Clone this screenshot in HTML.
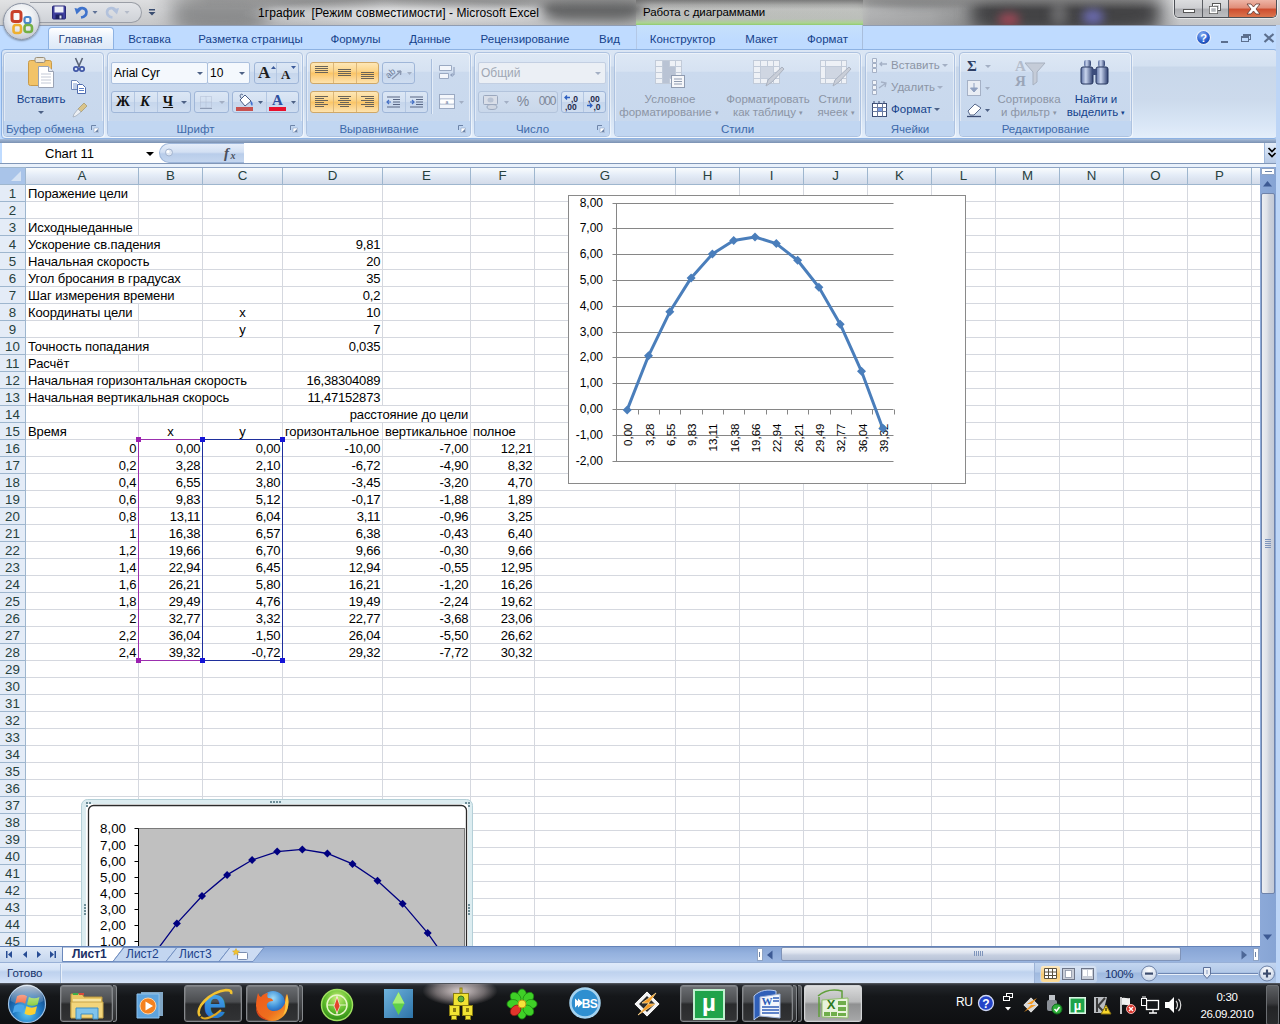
<!DOCTYPE html>
<html lang="ru">
<head>
<meta charset="utf-8">
<title>1график [Режим совместимости] - Microsoft Excel</title>
<style>
*{box-sizing:border-box;margin:0;padding:0}
html,body{width:1280px;height:1024px;overflow:hidden;background:#fff}
body{position:relative;font-family:"Liberation Sans",sans-serif;font-size:11px;color:#15428b}
.abs{position:absolute}
#titlebar{position:absolute;left:0;top:0;width:1280px;height:25px;background:#c9ccd1;overflow:hidden}
#tabrow{position:absolute;left:0;top:25px;width:1280px;height:25px;background:#bfdbff}
#ribbon{position:absolute;left:0;top:49px;width:1280px;height:91px;background:#bfdbff}
#fbar{position:absolute;left:0;top:140px;width:1280px;height:27px;background:#bcd2ee}
#grid{position:absolute;left:0;top:167px;width:1260px;height:779px;background:#fff;overflow:hidden}
#vscroll{position:absolute;left:1260px;top:167px;width:16px;height:795px;background:#b3cbea}
#tabsbar{position:absolute;left:0;top:946px;width:1280px;height:16px;background:#9db8df}
#status{position:absolute;left:0;top:962px;width:1280px;height:21px;background:#cfdff5}
#taskbar{position:absolute;left:0;top:983px;width:1280px;height:41px;background:#1a1d21}
</style>
</head>
<body>
<style>
#titlebar{background:linear-gradient(90deg,#d8d9db 0,#d2d3d5 150px,#c2c3c5 260px,#cfd0d2 520px,#bcbdbc 640px,#bfc1be 860px,#b4b5b6 870px,#a9aaab 930px,#8f9091 975px,#9b9c9e 1150px,#cfd0d2 1180px,#d2d3d5 1280px)}
#titlebar .shade{position:absolute;left:0;top:0;width:1280px;height:25px;background:linear-gradient(rgba(255,255,255,.25),rgba(255,255,255,0) 40%,rgba(0,0,0,.06) 100%)}
#titlebar .glow{position:absolute;left:240px;top:0;width:320px;height:25px;background:radial-gradient(ellipse 160px 14px at 50% 55%,rgba(255,255,255,.55),rgba(255,255,255,0))}
#titlebar .ctx{position:absolute;left:636px;top:0;width:227px;height:25px;background:linear-gradient(rgba(90,90,90,.55) 0,rgba(150,150,150,.25) 5px,rgba(200,200,200,.0) 9px,rgba(196,204,192,.25) 19px,#acd392 23px,#8fca6c 25px)}
#titlebar .blob{position:absolute;border-radius:50%;filter:blur(5px)}
#title{position:absolute;left:258px;top:6px;font-size:12px;color:#000;white-space:nowrap;letter-spacing:.08px}
#ctxtitle{position:absolute;left:643px;top:6px;font-size:11.5px;color:#000;white-space:nowrap;letter-spacing:-.05px}
#winbtns{position:absolute;left:1174px;top:0;width:103px;height:18px;border:1px solid #4c4f55;border-top:none;border-radius:0 0 5px 5px;overflow:hidden;box-shadow:0 0 0 1px rgba(255,255,255,.55)}
#winbtns div{position:absolute;top:0;height:18px}
#qat{position:absolute;left:30px;top:2px;width:112px;height:21px;border:1px solid #9a9ea6;border-left:none;border-radius:0 11px 11px 0;background:linear-gradient(#e3e5e9,#cfd2d7)}
#orb{position:absolute;left:3px;top:3px;width:37px;height:37px;border-radius:50%;background:radial-gradient(circle at 50% 35%,#ffffff 0,#eef0f3 40%,#c9ced8 75%,#aab1bf 100%);border:1px solid #8b93a3;box-shadow:0 1px 2px rgba(0,0,0,.35);z-index:5}
</style>
<div id="titlebar">
 <div class="blob" style="left:172px;top:-8px;width:95px;height:42px;background:#8e8f90;border-radius:35%;filter:blur(9px)"></div>
 <div class="blob" style="left:255px;top:-10px;width:130px;height:18px;background:#8a8b8c;filter:blur(6px)"></div>
 <div class="blob" style="left:380px;top:-8px;width:170px;height:15px;background:#8e8f90"></div>
 <div class="blob" style="left:542px;top:-6px;width:100px;height:27px;background:#636465;border-radius:30%;filter:blur(6px)"></div>
 <div class="blob" style="left:860px;top:-8px;width:120px;height:14px;background:#757677"></div>
 <div class="blob" style="left:972px;top:-8px;width:186px;height:40px;background:#434345;border-radius:25%;filter:blur(8px)"></div>
 <div class="blob" style="left:998px;top:13px;width:22px;height:14px;background:#a04a58"></div>
 <div class="blob" style="left:1050px;top:2px;width:18px;height:26px;background:#6a6a6c"></div>
 <div class="blob" style="left:1082px;top:9px;width:22px;height:16px;background:#6c6cb0"></div>
 <div class="abs" style="left:150px;top:0;width:1025px;height:9px;background:linear-gradient(rgba(75,75,75,.5),rgba(75,75,75,.28) 4px,rgba(75,75,75,0) 9px);-webkit-mask-image:linear-gradient(90deg,transparent,#000 60px,#000 980px,transparent)"></div>
 <div class="shade"></div>
 <div class="ctx"></div>
 <div class="glow"></div>
 <div id="qat"></div>
 <svg class="abs" style="left:46px;top:3px" width="120" height="20" viewBox="0 0 120 20">
  <rect x="6.500" y="3" width="13" height="13" rx="1" fill="#3f3f9f" stroke="#2a2a78"/>
  <rect x="8.500" y="3.500" width="9" height="6" fill="#eef0f8"/>
  <rect x="9.500" y="11.500" width="7" height="4.500" fill="#1d2060"/><rect x="13.500" y="12.500" width="2" height="3" fill="#dfe3f0"/>
  <path d="M32 8 C33 4 40 4 40.500 9 C40.500 12 38 14 35 14.500" fill="none" stroke="#3f73cc" stroke-width="2.600"/>
  <path d="M28.500 5 L35.500 6.500 L30.500 11.500 Z" fill="#3f73cc"/>
  <path d="M46.500 8 l5 0 l-2.500 3z" fill="#5f7296"/>
  <path d="M69.500 8 C68.500 4 61.500 4 61 9 C61 12 63.500 14 66.500 14.500" fill="none" stroke="#b3c2dc" stroke-width="2.600"/>
  <path d="M73 5 L66 6.500 L71 11.500 Z" fill="#b3c2dc"/>
  <path d="M78.500 8 l5 0 l-2.500 3z" fill="#b4bbc8"/>
  <rect x="103" y="6" width="6" height="1.500" fill="#3a4d70"/>
  <path d="M102.500 9 l7 0 l-3.500 3.500z" fill="#3a4d70"/>
 </svg>
 <div id="title">1график&nbsp; [Режим совместимости] - Microsoft Excel</div>
 <div id="ctxtitle">Работа с диаграммами</div>
 <div id="winbtns">
  <div style="left:0;width:28px;background:linear-gradient(#dcdddf 0,#cdced1 45%,#adaeb2 50%,#bfc0c3 100%);border-right:1px solid #5a5d63"></div>
  <div style="left:28px;width:26px;background:linear-gradient(#dcdddf 0,#cdced1 45%,#adaeb2 50%,#bfc0c3 100%);border-right:1px solid #5a5d63"></div>
  <div style="left:54px;width:48px;background:linear-gradient(#eeb5a6 0,#e08c77 45%,#cd4c2e 50%,#dd7a52 100%)"></div>
  <svg class="abs" style="left:0;top:0" width="102" height="18" viewBox="0 0 102 18">
   <rect x="8.500" y="9.500" width="11" height="3" fill="#fff" stroke="#555"/>
   <rect x="37.500" y="3.500" width="8" height="7" fill="none" stroke="#555" /><rect x="38.500" y="4.500" width="6" height="5" fill="none" stroke="#fff"/>
   <rect x="34.500" y="6.500" width="8" height="7" fill="#b3b6bb" stroke="#555"/><rect x="35.500" y="7.500" width="6" height="5" fill="none" stroke="#fff" stroke-width="1.500"/>
   <path d="M72 4 L76 4 L78.500 7 L81 4 L85 4 L81 9 L85 14 L81 14 L78.500 11 L76 14 L72 14 L76 9 Z" fill="#fff" stroke="#5b3530" stroke-width=".8"/>
  </svg>
 </div>
</div>
<div id="orb">
 <svg width="35" height="35" viewBox="0 0 35 35" style="position:absolute;left:0;top:0">
  <rect x="8" y="7.500" width="9" height="10" rx="2.500" fill="none" stroke="#c8402a" stroke-width="3"/>
  <rect x="20.500" y="13" width="6" height="6" rx="2" fill="none" stroke="#4a86c8" stroke-width="2.200"/>
  <rect x="9.500" y="21" width="7.500" height="8" rx="2.500" fill="none" stroke="#eeb030" stroke-width="2.600"/>
  <rect x="20.500" y="21" width="7.500" height="7" rx="2.500" fill="none" stroke="#74b044" stroke-width="2.600"/>
 </svg>
</div>
<style>
#tabrow .t{position:absolute;top:6px;height:16px;line-height:16px;font-size:11.5px;color:#15428b;white-space:nowrap;text-align:center}
#acttab{position:absolute;left:48px;top:2px;width:66px;height:24px;border:1px solid #8db2e3;border-bottom:none;border-radius:4px 4px 0 0;background:linear-gradient(#ffffff 0,#eaf2fc 40%,#dbe7f6 100%)}
#ctxzone{position:absolute;left:636px;top:0;width:227px;height:25px;border-left:1px solid #b3c8e6;border-right:1px solid #a9bedc;background:linear-gradient(#c6e0fb,#bfdbff 60%)}
</style>
<div id="tabrow">
 <div class="abs" style="left:0;top:0;width:1280px;height:1px;background:#8f9cb2"></div>
 <div id="ctxzone"></div>
 <div id="acttab"></div>
 <div class="t" style="left:49px;width:63px;color:#1e3f7a">Главная</div>
 <div class="t" style="left:119px;width:61px">Вставка</div>
 <div class="t" style="left:189px;width:123px">Разметка страницы</div>
 <div class="t" style="left:321px;width:69px">Формулы</div>
 <div class="t" style="left:399px;width:62px">Данные</div>
 <div class="t" style="left:470px;width:110px">Рецензирование</div>
 <div class="t" style="left:589px;width:41px">Вид</div>
 <div class="t" style="left:642px;width:81px">Конструктор</div>
 <div class="t" style="left:731px;width:61px">Макет</div>
 <div class="t" style="left:797px;width:61px">Формат</div>
 <svg class="abs" style="left:1194px;top:3px" width="86" height="20" viewBox="0 0 86 20">
  <defs><radialGradient id="hg" cx=".4" cy=".3" r=".8"><stop offset="0" stop-color="#8fb4f2"/><stop offset=".6" stop-color="#2a5fd0"/><stop offset="1" stop-color="#123a94"/></radialGradient></defs>
  <circle cx="9.500" cy="9.500" r="7" fill="url(#hg)" stroke="#e8f0fb" stroke-width="1.200"/>
  <text x="9.500" y="13.500" font-family="Liberation Sans,sans-serif" font-size="11" font-weight="bold" fill="#fff" text-anchor="middle">?</text>
  <rect x="27" y="13" width="7" height="2" fill="#5c6f8e"/>
  <rect x="49.500" y="6.500" width="7" height="5" fill="none" stroke="#5c6f8e"/><rect x="49" y="6" width="8" height="2" fill="#5c6f8e"/>
  <rect x="47.500" y="8.500" width="7" height="5" fill="#bfdbff" stroke="#5c6f8e"/><rect x="47" y="8" width="8" height="2" fill="#5c6f8e"/>
  <path d="M70.500 6 L79.500 14 M79.500 6 L70.500 14" stroke="#5c6f8e" stroke-width="2.200"/>
 </svg>
</div>
<style>
#ribbon .frame{position:absolute;left:1px;top:0;width:1277px;height:90px;border:1px solid #8db2e3;border-radius:4px;background:linear-gradient(#dbe6f4 0,#d4e1f1 16px,#c8d7ea 17px,#ccdaec 50px,#d9e6f6 74px,#e5effb 89px)}
.grp{position:absolute;top:1px;height:85px;border:1px solid #adc2e0;border-radius:4px;background:linear-gradient(#dde8f5 0,#d6e2f2 22%,#cbdaee 23%,#c8d8ed 80%,#c9d9ee 100%);box-shadow:inset 0 0 0 1px rgba(255,255,255,.45),1px 1px 0 rgba(255,255,255,.5)}
.grp .lbl{position:absolute;left:0;right:0;bottom:0;height:15px;line-height:16px;background:#c1d6f1;color:#3e6aaa;font-size:11.5px;text-align:center;border-radius:0 0 3px 3px;white-space:nowrap}
.grp .dl{position:absolute;right:4px;bottom:3px;width:8px;height:8px}
.rt{position:absolute;font-size:11.5px;line-height:13px;color:#15428b;white-space:nowrap;text-align:center}
.dis{color:#8c95a5}
.box{position:absolute;height:22px;border:1px solid #abc0de;border-radius:2px;background:#d5e1f2}
.btns{position:absolute;height:22px;border:1px solid #9fb6d8;border-radius:3px;background:linear-gradient(#dce7f5 0,#d3e0f1 48%,#c6d6ec 52%,#cfddf0 100%)}
.btns i{position:absolute;top:0;width:1px;height:20px;background:#b4c7e2}
.obtn{position:absolute;height:22px;border:1px solid #cfa868;border-radius:3px;background:linear-gradient(#fee7b6 0,#fcd58a 40%,#fbc668 52%,#fcd48c 75%,#fee3ad 100%)}
.obtn i{position:absolute;top:0;width:1px;height:20px;background:#dcb678}
.ar{position:absolute;width:0;height:0;border-left:3px solid transparent;border-right:3px solid transparent;border-top:3px solid #4d6185}
.ar.g{border-top-color:#a3afc4}
</style>
<div id="ribbon">
<div class="frame"></div>
<div class="abs" style="left:0;top:2px;width:1280px;height:89px">

<!-- ===== Буфер обмена ===== -->
<div class="grp" style="left:3px;width:101px">
 <div class="lbl" style="text-align:left;padding-left:2px">Буфер обмена</div>
 <svg class="dl" viewBox="0 0 8 8"><path d="M.5 5V.5H5" fill="none" stroke="#6d84a8"/><path d="M3 3h4.500v4.500H3z" fill="#fff" stroke="#8ea2c2" stroke-width=".6"/><path d="M4 7L7 7L7 4Z" fill="#6d84a8"/></svg>
</div>
<svg class="abs" style="left:26px;top:5px" width="34" height="34" viewBox="0 0 34 34">
 <rect x="2.500" y="4.500" width="23" height="25" rx="2" fill="#f2c368" stroke="#c89a4a"/>
 <rect x="9" y="1.500" width="10" height="5" rx="1.500" fill="#e9e4d8" stroke="#9a8e78"/>
 <path d="M12.500 10.500h10l5 5v16h-15z" fill="#fff" stroke="#9aa3b5"/>
 <path d="M22.500 10.500v5h5" fill="#e4e8f0" stroke="#9aa3b5"/>
 <path d="M15 18h10M15 21h10M15 24h10M15 27h10" stroke="#c3c9d6"/>
</svg>
<div class="rt" style="left:11px;width:60px;top:42px">Вставить</div>
<div class="ar" style="left:38px;top:60px"></div>
<svg class="abs" style="left:70px;top:6px" width="20" height="62" viewBox="0 0 20 62">
 <path d="M5.500 1 L9.500 10 M12.500 1 L8.500 10" stroke="#5a6478" stroke-width="1.600" fill="none"/>
 <circle cx="6" cy="12" r="2.200" fill="none" stroke="#3f55a5" stroke-width="1.700"/><circle cx="12" cy="12" r="2.200" fill="none" stroke="#3f55a5" stroke-width="1.700"/>
 <path d="M1.500 23.500h5l3 3v6h-8z" fill="#fff" stroke="#6d86b8"/><path d="M3 27h4M3 29h4M3 31h4" stroke="#7f9bd0"/>
 <path d="M7.500 27.500h5l3 3v6h-8z" fill="#fff" stroke="#4f6cae"/><path d="M9 31.500h5M9 33.500h5" stroke="#5f82c8"/>
 <path d="M14 46 l3 3 l-6 6 l-3 -3z" fill="#d9c48a" stroke="#a89a72" stroke-width=".8"/><path d="M8 52l3 3l-5 4l-3 1l1 -3z" fill="#eceff3" stroke="#a5adba" stroke-width=".8"/>
</svg>

<!-- ===== Шрифт ===== -->
<div class="grp" style="left:107px;width:196px">
 <div class="lbl" style="padding-right:19px">Шрифт</div>
 <svg class="dl" viewBox="0 0 8 8"><path d="M.5 5V.5H5" fill="none" stroke="#6d84a8"/><path d="M3 3h4.500v4.500H3z" fill="#fff" stroke="#8ea2c2" stroke-width=".6"/><path d="M4 7L7 7L7 4Z" fill="#6d84a8"/></svg>
</div>
<div class="box" style="left:111px;top:11px;width:97px;background:#f4f8fd"></div>
<div class="rt" style="left:114px;top:16px;color:#000;font-size:12px">Arial Cyr</div>
<div class="ar" style="left:197px;top:21px"></div>
<div class="box" style="left:207px;top:11px;width:43px;background:#f4f8fd"></div>
<div class="rt" style="left:210px;top:16px;color:#000;font-size:12px">10</div>
<div class="ar" style="left:239px;top:21px"></div>
<div class="btns" style="left:254px;top:11px;width:45px"><i style="left:21px"></i></div>
<div class="rt" style="left:258px;top:13px;color:#1f1f1f;font-family:'Liberation Serif',serif;font-size:17px;font-weight:bold;line-height:18px">A</div>
<div class="rt" style="left:281px;top:16px;color:#1f1f1f;font-family:'Liberation Serif',serif;font-size:13px;font-weight:bold;line-height:16px">A</div>
<svg class="abs" style="left:270px;top:14px" width="28" height="8" viewBox="0 0 28 8"><path d="M1 4l2.500-3l2.500 3z" fill="#3b5a9a"/><path d="M21 1l2.500 3l2.500-3z" fill="#3b5a9a"/></svg>

<div class="btns" style="left:111px;top:40px;width:80px"><i style="left:22px"></i><i style="left:45px"></i></div>
<div class="rt" style="left:113px;top:43px;width:20px;color:#111;font-family:'Liberation Serif',serif;font-size:14px;font-weight:bold;line-height:16px">Ж</div>
<div class="rt" style="left:135px;top:43px;width:20px;color:#111;font-family:'Liberation Serif',serif;font-size:14px;font-weight:bold;font-style:italic;line-height:16px">К</div>
<div class="rt" style="left:158px;top:43px;width:20px;color:#111;font-family:'Liberation Serif',serif;font-size:14px;font-weight:bold;text-decoration:underline;line-height:16px">Ч</div>
<div class="ar" style="left:181px;top:50px"></div>
<div class="btns" style="left:194px;top:40px;width:35px"></div>
<svg class="abs" style="left:199px;top:44px" width="16" height="15" viewBox="0 0 16 15"><path d="M1.500 1.500h11v11h-11z M7 1.500v11 M1.500 7h11" fill="none" stroke="#b1bdd2" stroke-dasharray="1 1"/><path d="M1 13.500h12" stroke="#8e9cb5"/></svg>
<div class="ar g" style="left:219px;top:50px"></div>
<div class="btns" style="left:232px;top:40px;width:67px"><i style="left:33px"></i></div>
<svg class="abs" style="left:235px;top:42px" width="62" height="19" viewBox="0 0 62 19">
 <path d="M5 7l5-5l6 6l-6 5z" fill="#fff" stroke="#4a5d85"/><path d="M8 2c-2-2-4 0-2 3" fill="none" stroke="#4a5d85"/><path d="M16 8c2 1 2 4 1 5c-1-1-2-3-1-5z" fill="#3e6fd0"/>
 <rect x="1" y="14" width="17" height="4" fill="#c8514f"/>
 <path d="M23 8l5 0l-2.500 3z" fill="#4d6185"/>
 <text x="42.500" y="12" font-family="Liberation Serif,serif" font-size="15" font-weight="bold" fill="#2d4f9e" text-anchor="middle">A</text>
 <rect x="34" y="14" width="17" height="4" fill="#e8112d"/>
 <path d="M56 8l5 0l-2.500 3z" fill="#4d6185"/>
</svg>

<!-- ===== Выравнивание ===== -->
<div class="grp" style="left:306px;width:165px">
 <div class="lbl" style="padding-right:19px">Выравнивание</div>
 <svg class="dl" viewBox="0 0 8 8"><path d="M.5 5V.5H5" fill="none" stroke="#6d84a8"/><path d="M3 3h4.500v4.500H3z" fill="#fff" stroke="#8ea2c2" stroke-width=".6"/><path d="M4 7L7 7L7 4Z" fill="#6d84a8"/></svg>
</div>
<div class="obtn" style="left:310px;top:11px;width:69px"><i style="left:22px"></i><i style="left:45px"></i></div>
<svg class="abs" style="left:310px;top:11px" width="69" height="22" viewBox="0 0 69 22"><path d="M5 4.500h13M5 6.500h13M5 8.500h13M5 10.500h13 M28 7.500h13M28 9.500h13M28 11.500h13M28 13.500h13 M51 10.500h13M51 12.500h13M51 14.500h13M51 16.500h13" stroke="#6a6458" stroke-width="1"/></svg>
<div class="btns" style="left:382px;top:11px;width:33px"></div>
<svg class="abs" style="left:385px;top:13px" width="30" height="18" viewBox="0 0 30 18"><text x="1" y="12" font-family="Liberation Sans,sans-serif" font-size="9" fill="#6d7c99" transform="rotate(-40 6 10)">ab</text><path d="M7 15l9-8M16 7l-4 .500M16 7l-.500 4" stroke="#8a97b0" stroke-width="1.300" fill="none"/><path d="M22 8l5 0l-2.500 3z" fill="#a3afc4"/></svg>
<div class="abs" style="left:431px;top:8px;width:1px;height:55px;background:#a9bedc;box-shadow:1px 0 0 #e4edf8"></div>
<svg class="abs" style="left:437px;top:13px" width="30" height="50" viewBox="0 0 30 50">
 <path d="M2.500 1.500h12v5h-12z M2.500 9.500h9v5h-9z" fill="#f3f6fb" stroke="#9aa9c2"/><path d="M17 3v8h-3M15.500 9.500l-2 1.500l2 1.500" fill="none" stroke="#8898b6"/>
 <rect x="2.500" y="30.500" width="15" height="14" fill="#f3f6fb" stroke="#9aa9c2"/><path d="M2.500 35h15M2.500 40h15" stroke="#9aa9c2"/><rect x="3.500" y="35.500" width="13" height="4" fill="#fff"/><text x="10" y="39.500" font-size="5" font-family="Liberation Sans,sans-serif" fill="#66759a" text-anchor="middle">a</text>
 <path d="M22 37l5 0l-2.500 3z" fill="#a3afc4"/>
</svg>
<div class="obtn" style="left:310px;top:40px;width:69px"><i style="left:22px"></i><i style="left:45px"></i></div>
<svg class="abs" style="left:310px;top:40px" width="69" height="22" viewBox="0 0 69 22"><path d="M5 5.500h13M5 7.500h9M5 9.500h13M5 11.500h9M5 13.500h13M5 15.500h9 M28 5.500h13M30 7.500h9M28 9.500h13M30 11.500h9M28 13.500h13M30 15.500h9 M51 5.500h13M55 7.500h9M51 9.500h13M55 11.500h9M51 13.500h13M55 15.500h9" stroke="#6a6458" stroke-width="1"/></svg>
<div class="btns" style="left:382px;top:40px;width:46px"><i style="left:22px"></i></div>
<svg class="abs" style="left:382px;top:40px" width="46" height="22" viewBox="0 0 46 22"><path d="M5 6h13M11 8.500h7M11 11h7M11 13.500h7M5 16h13 M28 6h13M34 8.500h7M34 11h7M34 13.500h7M28 16h13" stroke="#586684" stroke-width="1.100"/><path d="M9 11l-4 0M7 9l-2 2l2 2 M28 11l4 0M30 9l2 2l-2 2" stroke="#4670c4" fill="none" stroke-width="1.200"/></svg>

<!-- ===== Число ===== -->
<div class="grp" style="left:474px;width:136px">
 <div class="lbl" style="padding-right:19px">Число</div>
 <svg class="dl" viewBox="0 0 8 8"><path d="M.5 5V.5H5" fill="none" stroke="#6d84a8"/><path d="M3 3h4.500v4.500H3z" fill="#fff" stroke="#8ea2c2" stroke-width=".6"/><path d="M4 7L7 7L7 4Z" fill="#6d84a8"/></svg>
</div>
<div class="box" style="left:478px;top:11px;width:128px;background:#ebeff5;border-color:#c3cfe2"></div>
<div class="rt" style="left:481px;top:16px;color:#a0a7b4;font-size:12px">Общий</div>
<div class="ar g" style="left:595px;top:21px"></div>
<div class="btns" style="left:478px;top:40px;width:80px;background:linear-gradient(#d3dfef,#c9d7ea);border-color:#b3c4dc"></div>
<svg class="abs" style="left:481px;top:43px" width="30" height="18" viewBox="0 0 30 18"><rect x="2.500" y="1.500" width="14" height="9" rx="1" fill="#d9dee8" stroke="#9ba8be"/><ellipse cx="9.500" cy="6" rx="3" ry="2.500" fill="#b9c3d4"/><ellipse cx="11" cy="13" rx="5" ry="2.500" fill="#cfd6e2" stroke="#9ba8be"/><path d="M23 7l5 0l-2.500 3z" fill="#a3afc4"/></svg>
<div class="rt" style="left:512px;top:44px;width:22px;color:#7d8798;font-size:14px">%</div>
<div class="rt" style="left:535px;top:44px;width:24px;color:#7d8798;font-size:12px;letter-spacing:-1.2px">000</div>
<div class="btns" style="left:561px;top:40px;width:45px"><i style="left:21px"></i></div>
<svg class="abs" style="left:561px;top:40px" width="45" height="22" viewBox="0 0 45 22">
 <g font-family="Liberation Sans,sans-serif" font-size="8.500" font-weight="bold" fill="#1d2a4a"><text x="10" y="10.500">,0</text><text x="4" y="18.500">,00</text><text x="27" y="10.500">,00</text><text x="32.500" y="18.500">,0</text></g>
 <path d="M9 6.500h-5M6 4.500l-2 2l2 2 M26 14.500h5M29 12.500l2 2l-2 2" stroke="#2c5fc0" stroke-width="1.300" fill="none"/>
</svg>

<!-- ===== Стили ===== -->
<div class="grp" style="left:614px;width:247px"><div class="lbl">Стили</div></div>
<svg class="abs" style="left:654px;top:8px" width="34" height="30" viewBox="0 0 34 30">
 <rect x="1.500" y="1.500" width="26" height="23" fill="#eef1f6" stroke="#c2cbd9"/><path d="M1.500 7.500h26M1.500 13.500h26M1.500 19.500h26M8.500 1.500v23M15.500 1.500v23M21.500 1.500v23" stroke="#c2cbd9"/>
 <rect x="9" y="2" width="6" height="22" fill="#b9c3d4"/><rect x="15" y="8" width="6" height="11" fill="#b9c3d4"/>
 <rect x="17.500" y="16.500" width="13" height="12" fill="#f6f7fa" stroke="#8f9bb0"/><path d="M20 20h8M20 22.500h8M20 25h8" stroke="#8f9bb0"/>
</svg>
<div class="rt dis" style="left:620px;width:100px;top:42px">Условное</div>
<div class="rt dis" style="left:615px;width:108px;top:55px">форматирование <span style="font-size:7px;vertical-align:1px">▾</span></div>
<svg class="abs" style="left:752px;top:8px" width="34" height="30" viewBox="0 0 34 30">
 <rect x="1.500" y="1.500" width="26" height="23" fill="#eef1f6" stroke="#c2cbd9"/><path d="M1.500 7.500h26M1.500 13.500h26M1.500 19.500h26M8.500 1.500v23M15.500 1.500v23M21.500 1.500v23" stroke="#c2cbd9"/>
 <rect x="9" y="8" width="12" height="11" fill="#cfd6e2"/>
 <path d="M30 8l2 2l-12 13l-6 4l2 -6z" fill="#c9ced8" stroke="#aab2c0"/>
</svg>
<div class="rt dis" style="left:718px;width:100px;top:42px">Форматировать</div>
<div class="rt dis" style="left:718px;width:100px;top:55px">как таблицу <span style="font-size:7px;vertical-align:1px">▾</span></div>
<svg class="abs" style="left:819px;top:8px" width="34" height="30" viewBox="0 0 34 30">
 <rect x="1.500" y="1.500" width="26" height="23" fill="#eef1f6" stroke="#c2cbd9"/><path d="M1.500 7.500h26M1.500 19.500h26M6.500 1.500v23M22.500 1.500v23" stroke="#c2cbd9"/>
 <rect x="7" y="8" width="15" height="11" fill="#cfd6e2"/>
 <path d="M30 8l2 2l-12 13l-6 4l2 -6z" fill="#c9ced8" stroke="#aab2c0"/>
</svg>
<div class="rt dis" style="left:805px;width:60px;top:42px">Стили</div>
<div class="rt dis" style="left:803px;width:66px;top:55px">ячеек <span style="font-size:7px;vertical-align:1px">▾</span></div>

<!-- ===== Ячейки ===== -->
<div class="grp" style="left:865px;width:90px"><div class="lbl">Ячейки</div></div>
<svg class="abs" style="left:870px;top:5px" width="20" height="64" viewBox="0 0 20 64">
 <path d="M2.500 2.500h4v4h-4zM2.500 7.500h4v4h-4zM2.500 12.500h4v4h-4z" fill="#f1f4f9" stroke="#a5b1c6"/><path d="M17 8h-7M12 6l-2 2l2 2" stroke="#a5b1c6" fill="none" stroke-width="1.300"/>
 <path d="M2.500 24.500h4v4h-4zM2.500 29.500h4v4h-4zM2.500 34.500h4v4h-4z" fill="#f1f4f9" stroke="#a5b1c6"/><path d="M9 32l7-5M11 26l5 1l-1 4" stroke="#a5b1c6" fill="none" stroke-width="1.300"/>
 <rect x="2.500" y="47.500" width="14" height="13" fill="#fff" stroke="#3c4d74"/><path d="M2.500 51.500h14M2.500 55.500h14M7.500 47.500v13M12.500 47.500v13" stroke="#6b7ba0"/><rect x="8" y="52" width="4" height="3" fill="#7a9be0"/><path d="M4 45v3M9 45v3M14 45v3" stroke="#3c4d74"/>
</svg>
<div class="rt dis" style="left:891px;top:8px">Вставить</div><div class="ar g" style="left:942px;top:13px"></div>
<div class="rt dis" style="left:891px;top:30px">Удалить</div><div class="ar g" style="left:937px;top:35px"></div>
<div class="rt" style="left:891px;top:52px">Формат</div><div class="ar" style="left:934px;top:57px"></div>

<!-- ===== Редактирование ===== -->
<div class="grp" style="left:959px;width:173px"><div class="lbl">Редактирование</div></div>
<div class="rt" style="left:967px;top:6px;font-family:'Liberation Serif',serif;font-size:15px;font-weight:bold;color:#2c3d63;line-height:18px">Σ</div>
<div class="ar g" style="left:985px;top:14px"></div>
<svg class="abs" style="left:965px;top:27px" width="30" height="42" viewBox="0 0 30 42">
 <rect x="2.500" y="2.500" width="13" height="15" fill="#e9edf4" stroke="#a5b1c6"/><path d="M9 5v8M5.500 10l3.500 4l3.500-4z" stroke="#8fa0c0" fill="#8fa0c0"/>
 <path d="M20 9l5 0l-2.500 3z" fill="#a3afc4"/>
 <path d="M3 33l7-7l6 4l-7 7h-4z" fill="#fff" stroke="#5a6a8c"/><path d="M2 38.500h14" stroke="#3c4d74" stroke-width="1.300"/>
 <path d="M20 31l5 0l-2.500 3z" fill="#4d6185"/>
</svg>
<svg class="abs" style="left:1012px;top:6px" width="36" height="32" viewBox="0 0 36 32">
 <text x="3" y="14" font-family="Liberation Serif,serif" font-size="15" font-weight="bold" fill="#b3bccb">А</text>
 <text x="3" y="29" font-family="Liberation Serif,serif" font-size="15" font-weight="bold" fill="#9aa5b8">Я</text>
 <path d="M13 6h20l-8 9v10l-4 3v-13z" fill="#c5ccd8" stroke="#a8b1c0"/>
</svg>
<div class="rt dis" style="left:989px;width:80px;top:42px">Сортировка</div>
<div class="rt dis" style="left:989px;width:80px;top:55px">и фильтр <span style="font-size:7px;vertical-align:1px">▾</span></div>
<svg class="abs" style="left:1079px;top:8px" width="32" height="28" viewBox="0 0 32 28">
 <defs><linearGradient id="bn" x1="0" x2="1"><stop offset="0" stop-color="#5a6ea0"/><stop offset=".4" stop-color="#c9d5ee"/><stop offset="1" stop-color="#2d3f70"/></linearGradient></defs>
 <rect x="5" y="1" width="7" height="7" rx="2" fill="url(#bn)"/><rect x="19" y="1" width="7" height="7" rx="2" fill="url(#bn)"/>
 <rect x="2" y="8" width="12" height="17" rx="2" fill="url(#bn)" stroke="#27375f"/><rect x="17" y="8" width="12" height="17" rx="2" fill="url(#bn)" stroke="#27375f"/>
 <rect x="13" y="10" width="5" height="6" fill="#3c4d7c"/>
</svg>
<div class="rt" style="left:1056px;width:80px;top:42px">Найти и</div>
<div class="rt" style="left:1056px;width:80px;top:55px">выделить <span style="font-size:7px;vertical-align:1px">▾</span></div>
</div>
</div>
<style>
#fbar{background:#bfdbff}
#fbar .top{position:absolute;left:0;top:-1px;width:1280px;height:4px;background:linear-gradient(#a9bdd9,#93a9c8 40%,#8399b9 85%,#7389aa)}
#fbar .white{position:absolute;left:2px;top:3px;width:1262px;height:20px;background:#fff}
#fbar .line1{position:absolute;left:0;top:23px;width:1280px;height:1px;background:#8197b8}
#fbar .gap{position:absolute;left:0;top:24px;width:1280px;height:3px;background:#e9f1fb}
#namebox{position:absolute;left:45px;top:6px;font-size:13px;line-height:16px;color:#000;white-space:nowrap}
#pill{position:absolute;left:159px;top:3px;width:85px;height:20px;border-radius:10px 0 0 10px;background:linear-gradient(#e6eefa 0,#d3e0f3 45%,#b9cdea 55%,#c4d6ef 100%);border:1px solid #9fb7da;border-right:none}
#fxexp{position:absolute;left:1264px;top:3px;width:15px;height:20px;background:linear-gradient(#e4edf9 0,#cddcf1 50%,#b5c9e6 100%);border-left:1px solid #9fb7da}
</style>
<div id="fbar">
 <div class="top"></div>
 <div class="white"></div>
 <div id="namebox">Chart 11</div>
 <div class="ar" style="left:146px;top:12px;border-top-color:#000;border-left-width:4px;border-right-width:4px;border-top-width:4px"></div>
 <div id="pill"></div>
 <svg class="abs" style="left:162px;top:5px" width="82" height="17" viewBox="0 0 82 17">
  <circle cx="7" cy="7.500" r="3.500" fill="#dfe7f3" stroke="#a3b4d0"/><circle cx="6" cy="6.500" r="1.500" fill="#fff"/>
  <text x="62" y="13" font-family="Liberation Serif,serif" font-style="italic" font-weight="bold" font-size="15" fill="#4a4f5c">f</text>
  <text x="68.500" y="13.500" font-family="Liberation Serif,serif" font-style="italic" font-weight="bold" font-size="10" fill="#4a4f5c">x</text>
 </svg>
 <div id="fxexp"><svg width="14" height="20" viewBox="0 0 14 20"><path d="M3.500 5l3.500 3.500l3.500-3.500M3.500 10l3.500 3.500l3.500-3.500" fill="none" stroke="#000" stroke-width="1.700"/></svg></div>
 <div class="line1"></div>
 <div class="gap"></div>
</div>
<style>
#grid .vl{position:absolute;top:18px;width:1px;height:770px;background:#d5d8df}
#grid .hl{position:absolute;left:25px;height:1px;width:1240px;background:#d5d8df}
#colhdr{position:absolute;left:0;top:0;width:1260px;height:18px;background:linear-gradient(#f9fcfd 0,#e4ecf7 45%,#d3dbe9 100%);border-bottom:1px solid #9eb6ce;border-top:1px solid #8ea4c4}
#colhdr span{position:absolute;top:0;height:16px;line-height:16px;text-align:center;font-size:13.300px;color:#27413e;border-right:1px solid #9eb6ce}
#rowhdr{position:absolute;left:0;top:18px;width:26px;height:770px;background:#e4ecf7;border-right:1px solid #9eb6ce}
#rowhdr span{position:absolute;left:0;width:25px;height:17px;line-height:17px;text-align:center;font-size:13.300px;color:#27413e;border-bottom:1px solid #9eb6ce}
#corner{position:absolute;left:0;top:0;width:26px;height:18px;background:#a9c4e9;border-right:1px solid #9eb6ce;border-bottom:1px solid #9eb6ce;border-top:1px solid #9eb6ce}
.c{position:absolute;height:16px;line-height:17px;font-size:13px;letter-spacing:-.09px;color:#000;white-space:nowrap}
.c.r{letter-spacing:-.2px}
.c b{font-weight:normal;display:inline-block;height:16px;background:#fff;padding:0 .8px 0 1px}
.r{text-align:right}
.m{text-align:center}
</style>

<div id="grid">
<div class="vl" style="left:138px"></div>
<div class="vl" style="left:202px"></div>
<div class="vl" style="left:282px"></div>
<div class="vl" style="left:382px"></div>
<div class="vl" style="left:470px"></div>
<div class="vl" style="left:534px"></div>
<div class="vl" style="left:675px"></div>
<div class="vl" style="left:739px"></div>
<div class="vl" style="left:803px"></div>
<div class="vl" style="left:867px"></div>
<div class="vl" style="left:931px"></div>
<div class="vl" style="left:995px"></div>
<div class="vl" style="left:1059px"></div>
<div class="vl" style="left:1123px"></div>
<div class="vl" style="left:1187px"></div>
<div class="vl" style="left:1251px"></div>
<div class="hl" style="top:34px"></div>
<div class="hl" style="top:51px"></div>
<div class="hl" style="top:68px"></div>
<div class="hl" style="top:85px"></div>
<div class="hl" style="top:102px"></div>
<div class="hl" style="top:119px"></div>
<div class="hl" style="top:136px"></div>
<div class="hl" style="top:153px"></div>
<div class="hl" style="top:170px"></div>
<div class="hl" style="top:187px"></div>
<div class="hl" style="top:204px"></div>
<div class="hl" style="top:221px"></div>
<div class="hl" style="top:238px"></div>
<div class="hl" style="top:255px"></div>
<div class="hl" style="top:272px"></div>
<div class="hl" style="top:289px"></div>
<div class="hl" style="top:306px"></div>
<div class="hl" style="top:323px"></div>
<div class="hl" style="top:340px"></div>
<div class="hl" style="top:357px"></div>
<div class="hl" style="top:374px"></div>
<div class="hl" style="top:391px"></div>
<div class="hl" style="top:408px"></div>
<div class="hl" style="top:425px"></div>
<div class="hl" style="top:442px"></div>
<div class="hl" style="top:459px"></div>
<div class="hl" style="top:476px"></div>
<div class="hl" style="top:493px"></div>
<div class="hl" style="top:510px"></div>
<div class="hl" style="top:527px"></div>
<div class="hl" style="top:544px"></div>
<div class="hl" style="top:561px"></div>
<div class="hl" style="top:578px"></div>
<div class="hl" style="top:595px"></div>
<div class="hl" style="top:612px"></div>
<div class="hl" style="top:629px"></div>
<div class="hl" style="top:646px"></div>
<div class="hl" style="top:663px"></div>
<div class="hl" style="top:680px"></div>
<div class="hl" style="top:697px"></div>
<div class="hl" style="top:714px"></div>
<div class="hl" style="top:731px"></div>
<div class="hl" style="top:748px"></div>
<div class="hl" style="top:765px"></div>
<div class="hl" style="top:782px"></div>
<div class="hl" style="top:799px"></div>
<div id="colhdr">
<span style="left:26px;width:113px">A</span>
<span style="left:139px;width:64px">B</span>
<span style="left:203px;width:80px">C</span>
<span style="left:283px;width:100px">D</span>
<span style="left:383px;width:88px">E</span>
<span style="left:471px;width:64px">F</span>
<span style="left:535px;width:141px">G</span>
<span style="left:676px;width:64px">H</span>
<span style="left:740px;width:64px">I</span>
<span style="left:804px;width:64px">J</span>
<span style="left:868px;width:64px">K</span>
<span style="left:932px;width:64px">L</span>
<span style="left:996px;width:64px">M</span>
<span style="left:1060px;width:64px">N</span>
<span style="left:1124px;width:64px">O</span>
<span style="left:1188px;width:64px">P</span>
</div>
<div id="rowhdr">
<span style="top:0px">1</span>
<span style="top:17px">2</span>
<span style="top:34px">3</span>
<span style="top:51px">4</span>
<span style="top:68px">5</span>
<span style="top:85px">6</span>
<span style="top:102px">7</span>
<span style="top:119px">8</span>
<span style="top:136px">9</span>
<span style="top:153px">10</span>
<span style="top:170px">11</span>
<span style="top:187px">12</span>
<span style="top:204px">13</span>
<span style="top:221px">14</span>
<span style="top:238px">15</span>
<span style="top:255px">16</span>
<span style="top:272px">17</span>
<span style="top:289px">18</span>
<span style="top:306px">19</span>
<span style="top:323px">20</span>
<span style="top:340px">21</span>
<span style="top:357px">22</span>
<span style="top:374px">23</span>
<span style="top:391px">24</span>
<span style="top:408px">25</span>
<span style="top:425px">26</span>
<span style="top:442px">27</span>
<span style="top:459px">28</span>
<span style="top:476px">29</span>
<span style="top:493px">30</span>
<span style="top:510px">31</span>
<span style="top:527px">32</span>
<span style="top:544px">33</span>
<span style="top:561px">34</span>
<span style="top:578px">35</span>
<span style="top:595px">36</span>
<span style="top:612px">37</span>
<span style="top:629px">38</span>
<span style="top:646px">39</span>
<span style="top:663px">40</span>
<span style="top:680px">41</span>
<span style="top:697px">42</span>
<span style="top:714px">43</span>
<span style="top:731px">44</span>
<span style="top:748px">45</span>
<span style="top:765px">46</span>
</div>
<div id="corner"><svg width="25" height="16" style="position:absolute;left:0;top:0"><path d="M21 3 L21 13 L11 13 Z" fill="#d5e2f3"/></svg></div>
<div class="c" style="left:27px;top:18px"><b>Поражение цели</b></div>
<div class="c" style="left:27px;top:52px"><b>Исходныеданные</b></div>
<div class="c" style="left:27px;top:69px"><b>Ускорение св.падения</b></div>
<div class="c" style="left:27px;top:86px"><b>Начальная скорость</b></div>
<div class="c" style="left:27px;top:103px"><b>Угол бросания в градусах</b></div>
<div class="c" style="left:27px;top:120px"><b>Шаг измерения времени</b></div>
<div class="c" style="left:27px;top:137px"><b>Координаты цели</b></div>
<div class="c" style="left:27px;top:171px"><b>Точность попадания</b></div>
<div class="c" style="left:27px;top:188px"><b>Расчёт</b></div>
<div class="c" style="left:27px;top:205px"><b>Начальная горизонтальная скорость</b></div>
<div class="c" style="left:27px;top:222px"><b>Начальная вертикальная скорось</b></div>
<div class="c" style="left:27px;top:256px"><b>Время</b></div>
<div class="c r" style="left:183px;width:198px;top:69px"><b>9,81</b></div>
<div class="c r" style="left:183px;width:198px;top:86px"><b>20</b></div>
<div class="c r" style="left:183px;width:198px;top:103px"><b>35</b></div>
<div class="c r" style="left:183px;width:198px;top:120px"><b>0,2</b></div>
<div class="c r" style="left:183px;width:198px;top:137px"><b>10</b></div>
<div class="c r" style="left:183px;width:198px;top:154px"><b>7</b></div>
<div class="c r" style="left:183px;width:198px;top:171px"><b>0,035</b></div>
<div class="c r" style="left:183px;width:198px;top:205px"><b>16,38304089</b></div>
<div class="c r" style="left:183px;width:198px;top:222px"><b>11,47152873</b></div>
<div class="c m" style="left:203px;width:79px;top:137px">x</div>
<div class="c m" style="left:203px;width:79px;top:154px">y</div>
<div class="c r" style="left:283px;width:186px;top:239px;letter-spacing:-.09px"><b>расстояние до цели</b></div>
<div class="c m" style="left:139px;width:63px;top:256px">x</div>
<div class="c m" style="left:203px;width:79px;top:256px">y</div>
<div class="c" style="left:284px;top:256px"><b>горизонтальное</b></div>
<div class="c" style="left:384px;top:256px"><b>вертикальное</b></div>
<div class="c" style="left:472px;top:256px"><b>полное</b></div>
<div class="c r" style="left:-74px;width:211px;top:273px"><b>0</b></div>
<div class="c r" style="left:39px;width:162px;top:273px"><b>0,00</b></div>
<div class="c r" style="left:103px;width:178px;top:273px"><b>0,00</b></div>
<div class="c r" style="left:183px;width:198px;top:273px"><b>-10,00</b></div>
<div class="c r" style="left:283px;width:186px;top:273px"><b>-7,00</b></div>
<div class="c r" style="left:371px;width:162px;top:273px"><b>12,21</b></div>
<div class="c r" style="left:-74px;width:211px;top:290px"><b>0,2</b></div>
<div class="c r" style="left:39px;width:162px;top:290px"><b>3,28</b></div>
<div class="c r" style="left:103px;width:178px;top:290px"><b>2,10</b></div>
<div class="c r" style="left:183px;width:198px;top:290px"><b>-6,72</b></div>
<div class="c r" style="left:283px;width:186px;top:290px"><b>-4,90</b></div>
<div class="c r" style="left:371px;width:162px;top:290px"><b>8,32</b></div>
<div class="c r" style="left:-74px;width:211px;top:307px"><b>0,4</b></div>
<div class="c r" style="left:39px;width:162px;top:307px"><b>6,55</b></div>
<div class="c r" style="left:103px;width:178px;top:307px"><b>3,80</b></div>
<div class="c r" style="left:183px;width:198px;top:307px"><b>-3,45</b></div>
<div class="c r" style="left:283px;width:186px;top:307px"><b>-3,20</b></div>
<div class="c r" style="left:371px;width:162px;top:307px"><b>4,70</b></div>
<div class="c r" style="left:-74px;width:211px;top:324px"><b>0,6</b></div>
<div class="c r" style="left:39px;width:162px;top:324px"><b>9,83</b></div>
<div class="c r" style="left:103px;width:178px;top:324px"><b>5,12</b></div>
<div class="c r" style="left:183px;width:198px;top:324px"><b>-0,17</b></div>
<div class="c r" style="left:283px;width:186px;top:324px"><b>-1,88</b></div>
<div class="c r" style="left:371px;width:162px;top:324px"><b>1,89</b></div>
<div class="c r" style="left:-74px;width:211px;top:341px"><b>0,8</b></div>
<div class="c r" style="left:39px;width:162px;top:341px"><b>13,11</b></div>
<div class="c r" style="left:103px;width:178px;top:341px"><b>6,04</b></div>
<div class="c r" style="left:183px;width:198px;top:341px"><b>3,11</b></div>
<div class="c r" style="left:283px;width:186px;top:341px"><b>-0,96</b></div>
<div class="c r" style="left:371px;width:162px;top:341px"><b>3,25</b></div>
<div class="c r" style="left:-74px;width:211px;top:358px"><b>1</b></div>
<div class="c r" style="left:39px;width:162px;top:358px"><b>16,38</b></div>
<div class="c r" style="left:103px;width:178px;top:358px"><b>6,57</b></div>
<div class="c r" style="left:183px;width:198px;top:358px"><b>6,38</b></div>
<div class="c r" style="left:283px;width:186px;top:358px"><b>-0,43</b></div>
<div class="c r" style="left:371px;width:162px;top:358px"><b>6,40</b></div>
<div class="c r" style="left:-74px;width:211px;top:375px"><b>1,2</b></div>
<div class="c r" style="left:39px;width:162px;top:375px"><b>19,66</b></div>
<div class="c r" style="left:103px;width:178px;top:375px"><b>6,70</b></div>
<div class="c r" style="left:183px;width:198px;top:375px"><b>9,66</b></div>
<div class="c r" style="left:283px;width:186px;top:375px"><b>-0,30</b></div>
<div class="c r" style="left:371px;width:162px;top:375px"><b>9,66</b></div>
<div class="c r" style="left:-74px;width:211px;top:392px"><b>1,4</b></div>
<div class="c r" style="left:39px;width:162px;top:392px"><b>22,94</b></div>
<div class="c r" style="left:103px;width:178px;top:392px"><b>6,45</b></div>
<div class="c r" style="left:183px;width:198px;top:392px"><b>12,94</b></div>
<div class="c r" style="left:283px;width:186px;top:392px"><b>-0,55</b></div>
<div class="c r" style="left:371px;width:162px;top:392px"><b>12,95</b></div>
<div class="c r" style="left:-74px;width:211px;top:409px"><b>1,6</b></div>
<div class="c r" style="left:39px;width:162px;top:409px"><b>26,21</b></div>
<div class="c r" style="left:103px;width:178px;top:409px"><b>5,80</b></div>
<div class="c r" style="left:183px;width:198px;top:409px"><b>16,21</b></div>
<div class="c r" style="left:283px;width:186px;top:409px"><b>-1,20</b></div>
<div class="c r" style="left:371px;width:162px;top:409px"><b>16,26</b></div>
<div class="c r" style="left:-74px;width:211px;top:426px"><b>1,8</b></div>
<div class="c r" style="left:39px;width:162px;top:426px"><b>29,49</b></div>
<div class="c r" style="left:103px;width:178px;top:426px"><b>4,76</b></div>
<div class="c r" style="left:183px;width:198px;top:426px"><b>19,49</b></div>
<div class="c r" style="left:283px;width:186px;top:426px"><b>-2,24</b></div>
<div class="c r" style="left:371px;width:162px;top:426px"><b>19,62</b></div>
<div class="c r" style="left:-74px;width:211px;top:443px"><b>2</b></div>
<div class="c r" style="left:39px;width:162px;top:443px"><b>32,77</b></div>
<div class="c r" style="left:103px;width:178px;top:443px"><b>3,32</b></div>
<div class="c r" style="left:183px;width:198px;top:443px"><b>22,77</b></div>
<div class="c r" style="left:283px;width:186px;top:443px"><b>-3,68</b></div>
<div class="c r" style="left:371px;width:162px;top:443px"><b>23,06</b></div>
<div class="c r" style="left:-74px;width:211px;top:460px"><b>2,2</b></div>
<div class="c r" style="left:39px;width:162px;top:460px"><b>36,04</b></div>
<div class="c r" style="left:103px;width:178px;top:460px"><b>1,50</b></div>
<div class="c r" style="left:183px;width:198px;top:460px"><b>26,04</b></div>
<div class="c r" style="left:283px;width:186px;top:460px"><b>-5,50</b></div>
<div class="c r" style="left:371px;width:162px;top:460px"><b>26,62</b></div>
<div class="c r" style="left:-74px;width:211px;top:477px"><b>2,4</b></div>
<div class="c r" style="left:39px;width:162px;top:477px"><b>39,32</b></div>
<div class="c r" style="left:103px;width:178px;top:477px"><b>-0,72</b></div>
<div class="c r" style="left:183px;width:198px;top:477px"><b>29,32</b></div>
<div class="c r" style="left:283px;width:186px;top:477px"><b>-7,72</b></div>
<div class="c r" style="left:371px;width:162px;top:477px"><b>30,32</b></div>
<div class="abs" style="left:138px;top:272px;width:65px;height:222px;border:1px solid #9b2fae"></div>
<div class="abs" style="left:202px;top:272px;width:81px;height:222px;border:1px solid #1f2f9c"></div>
<div class="abs" style="left:136px;top:270px;width:5px;height:5px;background:#9b1fb0"></div>
<div class="abs" style="left:136px;top:491px;width:5px;height:5px;background:#9b1fb0"></div>
<div class="abs" style="left:200px;top:270px;width:5px;height:5px;background:#1414d8"></div>
<div class="abs" style="left:200px;top:491px;width:5px;height:5px;background:#1414d8"></div>
<div class="abs" style="left:280px;top:270px;width:5px;height:5px;background:#1414d8"></div>
<div class="abs" style="left:280px;top:491px;width:5px;height:5px;background:#1414d8"></div>
<!--CHARTS-->
</div>
<style>
#charts{position:absolute;left:0;top:167px;width:1260px;height:779px;overflow:hidden;pointer-events:none}
#charts svg{position:absolute;overflow:visible}
#charts text{font-family:"Liberation Sans",sans-serif}
</style>
<div id="charts">
<svg style="left:0;top:-167px" width="1280" height="1024" viewBox="0 0 1280 1024">
<rect x="568.5" y="195.5" width="397" height="288" fill="#fff" stroke="#8a8a8a"/>
<path d="M612.5 461.5H893.5" stroke="#868686"/>
<text x="603" y="465.0" font-size="12" text-anchor="end" fill="#000">-2,00</text>
<path d="M612.5 435.5H893.5" stroke="#868686"/>
<text x="603" y="439.0" font-size="12" text-anchor="end" fill="#000">-1,00</text>
<path d="M612.5 409.5H893.5" stroke="#868686"/>
<text x="603" y="413.0" font-size="12" text-anchor="end" fill="#000">0,00</text>
<path d="M612.5 383.5H893.5" stroke="#868686"/>
<text x="603" y="387.0" font-size="12" text-anchor="end" fill="#000">1,00</text>
<path d="M612.5 357.5H893.5" stroke="#868686"/>
<text x="603" y="361.0" font-size="12" text-anchor="end" fill="#000">2,00</text>
<path d="M612.5 332.5H893.5" stroke="#868686"/>
<text x="603" y="336.0" font-size="12" text-anchor="end" fill="#000">3,00</text>
<path d="M612.5 306.5H893.5" stroke="#868686"/>
<text x="603" y="310.0" font-size="12" text-anchor="end" fill="#000">4,00</text>
<path d="M612.5 280.5H893.5" stroke="#868686"/>
<text x="603" y="284.0" font-size="12" text-anchor="end" fill="#000">5,00</text>
<path d="M612.5 254.5H893.5" stroke="#868686"/>
<text x="603" y="258.0" font-size="12" text-anchor="end" fill="#000">6,00</text>
<path d="M612.5 228.5H893.5" stroke="#868686"/>
<text x="603" y="232.0" font-size="12" text-anchor="end" fill="#000">7,00</text>
<path d="M612.5 203.5H893.5" stroke="#868686"/>
<text x="603" y="207.0" font-size="12" text-anchor="end" fill="#000">8,00</text>
<path d="M616.5 203V462" stroke="#868686"/>
<path d="M616.5 409.5v5" stroke="#868686"/>
<path d="M638.5 409.5v5" stroke="#868686"/>
<path d="M659.5 409.5v5" stroke="#868686"/>
<path d="M680.5 409.5v5" stroke="#868686"/>
<path d="M702.5 409.5v5" stroke="#868686"/>
<path d="M723.5 409.5v5" stroke="#868686"/>
<path d="M744.5 409.5v5" stroke="#868686"/>
<path d="M766.5 409.5v5" stroke="#868686"/>
<path d="M787.5 409.5v5" stroke="#868686"/>
<path d="M808.5 409.5v5" stroke="#868686"/>
<path d="M830.5 409.5v5" stroke="#868686"/>
<path d="M851.5 409.5v5" stroke="#868686"/>
<path d="M872.5 409.5v5" stroke="#868686"/>
<path d="M894.5 409.5v5" stroke="#868686"/>
<text x="632.2" y="423.500" font-size="11.500" text-anchor="end" fill="#000" transform="rotate(-90 632.2 423.500)">0,00</text>
<text x="653.5" y="423.500" font-size="11.500" text-anchor="end" fill="#000" transform="rotate(-90 653.5 423.500)">3,28</text>
<text x="674.8" y="423.500" font-size="11.500" text-anchor="end" fill="#000" transform="rotate(-90 674.8 423.500)">6,55</text>
<text x="696.1" y="423.500" font-size="11.500" text-anchor="end" fill="#000" transform="rotate(-90 696.1 423.500)">9,83</text>
<text x="717.4" y="423.500" font-size="11.500" text-anchor="end" fill="#000" transform="rotate(-90 717.4 423.500)">13,11</text>
<text x="738.7" y="423.500" font-size="11.500" text-anchor="end" fill="#000" transform="rotate(-90 738.7 423.500)">16,38</text>
<text x="760.0" y="423.500" font-size="11.500" text-anchor="end" fill="#000" transform="rotate(-90 760.0 423.500)">19,66</text>
<text x="781.3" y="423.500" font-size="11.500" text-anchor="end" fill="#000" transform="rotate(-90 781.3 423.500)">22,94</text>
<text x="802.6" y="423.500" font-size="11.500" text-anchor="end" fill="#000" transform="rotate(-90 802.6 423.500)">26,21</text>
<text x="823.9" y="423.500" font-size="11.500" text-anchor="end" fill="#000" transform="rotate(-90 823.9 423.500)">29,49</text>
<text x="845.2" y="423.500" font-size="11.500" text-anchor="end" fill="#000" transform="rotate(-90 845.2 423.500)">32,77</text>
<text x="866.5" y="423.500" font-size="11.500" text-anchor="end" fill="#000" transform="rotate(-90 866.5 423.500)">36,04</text>
<text x="887.8" y="423.500" font-size="11.500" text-anchor="end" fill="#000" transform="rotate(-90 887.8 423.500)">39,32</text>
<path d="M627.2 409.9 L648.5 355.8 L669.8 311.8 L691.1 277.9 L712.4 254.1 L733.7 240.5 L755.0 237.0 L776.3 243.6 L797.6 260.3 L818.9 287.2 L840.2 324.2 L861.5 371.3 L882.8 428.5" fill="none" stroke="#4a7ebb" stroke-width="3" stroke-linejoin="round" stroke-linecap="round"/>
<path d="M627.2 405.4l4.500 4.500l-4.500 4.500l-4.500-4.500z" fill="#4a7ebb"/>
<path d="M648.5 351.3l4.500 4.500l-4.500 4.500l-4.500-4.500z" fill="#4a7ebb"/>
<path d="M669.8 307.3l4.500 4.500l-4.500 4.500l-4.500-4.500z" fill="#4a7ebb"/>
<path d="M691.1 273.4l4.500 4.500l-4.500 4.500l-4.500-4.500z" fill="#4a7ebb"/>
<path d="M712.4 249.6l4.500 4.500l-4.500 4.500l-4.500-4.500z" fill="#4a7ebb"/>
<path d="M733.7 236.0l4.500 4.500l-4.500 4.500l-4.500-4.500z" fill="#4a7ebb"/>
<path d="M755.0 232.5l4.500 4.500l-4.500 4.500l-4.500-4.500z" fill="#4a7ebb"/>
<path d="M776.3 239.1l4.500 4.500l-4.500 4.500l-4.500-4.500z" fill="#4a7ebb"/>
<path d="M797.6 255.8l4.500 4.500l-4.500 4.500l-4.500-4.500z" fill="#4a7ebb"/>
<path d="M818.9 282.7l4.500 4.500l-4.500 4.500l-4.500-4.500z" fill="#4a7ebb"/>
<path d="M840.2 319.7l4.500 4.500l-4.500 4.500l-4.500-4.500z" fill="#4a7ebb"/>
<path d="M861.5 366.8l4.500 4.500l-4.500 4.500l-4.500-4.500z" fill="#4a7ebb"/>
<path d="M882.8 424.0l4.500 4.500l-4.500 4.500l-4.500-4.500z" fill="#4a7ebb"/>
</svg>
<svg style="left:0;top:-167px" width="1280" height="1024" viewBox="0 0 1280 1024">
<rect x="83.500" y="801.500" width="387" height="200" rx="5" fill="#fff" stroke="#dcecf0" stroke-width="5"/>
<rect x="81.500" y="799.500" width="391" height="204" rx="6" fill="none" stroke="#b4d0d8" stroke-width="1"/>
<rect x="88.500" y="805.500" width="378" height="200" rx="5" fill="#fff" stroke="#2b2b2b" stroke-width="1.300"/>
<rect x="270" y="801" width="2" height="2" fill="#6f8f99"/><rect x="273" y="801" width="2" height="2" fill="#6f8f99"/><rect x="276" y="801" width="2" height="2" fill="#6f8f99"/><rect x="279" y="801" width="2" height="2" fill="#6f8f99"/>
<rect x="84" y="904" width="2" height="2" fill="#6f8f99"/><rect x="84" y="907" width="2" height="2" fill="#6f8f99"/><rect x="84" y="910" width="2" height="2" fill="#6f8f99"/><rect x="84" y="913" width="2" height="2" fill="#6f8f99"/>
<rect x="468" y="904" width="2" height="2" fill="#6f8f99"/><rect x="468" y="907" width="2" height="2" fill="#6f8f99"/><rect x="468" y="910" width="2" height="2" fill="#6f8f99"/><rect x="468" y="913" width="2" height="2" fill="#6f8f99"/>
<rect x="86" y="802" width="2" height="2" fill="#6f8f99"/><rect x="89" y="802" width="2" height="2" fill="#6f8f99"/><rect x="86" y="805" width="2" height="2" fill="#6f8f99"/>
<rect x="468" y="802" width="2" height="2" fill="#6f8f99"/><rect x="465" y="802" width="2" height="2" fill="#6f8f99"/><rect x="468" y="805" width="2" height="2" fill="#6f8f99"/>
<rect x="138.5" y="828.5" width="326.0" height="160" fill="#c0c0c0" stroke="#7a7a7a"/>
<path d="M134.5 957.5H138.5" stroke="#000"/>
<text x="126" y="962.0" font-size="13.300" text-anchor="end" fill="#000">0,00</text>
<path d="M134.5 941.5H138.5" stroke="#000"/>
<text x="126" y="946.0" font-size="13.300" text-anchor="end" fill="#000">1,00</text>
<path d="M134.5 925.5H138.5" stroke="#000"/>
<text x="126" y="930.0" font-size="13.300" text-anchor="end" fill="#000">2,00</text>
<path d="M134.5 909.5H138.5" stroke="#000"/>
<text x="126" y="914.0" font-size="13.300" text-anchor="end" fill="#000">3,00</text>
<path d="M134.5 893.5H138.5" stroke="#000"/>
<text x="126" y="898.0" font-size="13.300" text-anchor="end" fill="#000">4,00</text>
<path d="M134.5 877.5H138.5" stroke="#000"/>
<text x="126" y="882.0" font-size="13.300" text-anchor="end" fill="#000">5,00</text>
<path d="M134.5 861.5H138.5" stroke="#000"/>
<text x="126" y="866.0" font-size="13.300" text-anchor="end" fill="#000">6,00</text>
<path d="M134.5 845.5H138.5" stroke="#000"/>
<text x="126" y="850.0" font-size="13.300" text-anchor="end" fill="#000">7,00</text>
<path d="M134.5 828.5H138.5" stroke="#000"/>
<text x="126" y="833.0" font-size="13.300" text-anchor="end" fill="#000">8,00</text>
<path d="M138.5 828.5V990" stroke="#000"/>
<path d="M151.8 957.1 L176.9 923.4 L202.0 896.0 L227.1 874.9 L252.1 860.0 L277.2 851.6 L302.3 849.4 L327.4 853.5 L352.5 863.9 L377.5 880.7 L402.6 903.7 L427.7 933.1 L452.8 968.7" fill="none" stroke="#000080" stroke-width="1.300"/>
<path d="M151.8 953.1l4 4l-4 4l-4-4z" fill="#000080"/>
<path d="M176.9 919.4l4 4l-4 4l-4-4z" fill="#000080"/>
<path d="M202.0 892.0l4 4l-4 4l-4-4z" fill="#000080"/>
<path d="M227.1 870.9l4 4l-4 4l-4-4z" fill="#000080"/>
<path d="M252.1 856.0l4 4l-4 4l-4-4z" fill="#000080"/>
<path d="M277.2 847.6l4 4l-4 4l-4-4z" fill="#000080"/>
<path d="M302.3 845.4l4 4l-4 4l-4-4z" fill="#000080"/>
<path d="M327.4 849.5l4 4l-4 4l-4-4z" fill="#000080"/>
<path d="M352.5 859.9l4 4l-4 4l-4-4z" fill="#000080"/>
<path d="M377.5 876.7l4 4l-4 4l-4-4z" fill="#000080"/>
<path d="M402.6 899.7l4 4l-4 4l-4-4z" fill="#000080"/>
<path d="M427.7 929.1l4 4l-4 4l-4-4z" fill="#000080"/>
<path d="M452.8 964.7l4 4l-4 4l-4-4z" fill="#000080"/>
</svg>
</div>
<style>
#vscroll{background:linear-gradient(90deg,#8ca9d8,#86a4d4);z-index:3}
#rframe{position:absolute;left:1276px;top:25px;width:4px;height:958px;background:#bdd5f6;z-index:3}
#vscroll .split{position:absolute;left:1px;top:1px;width:14px;height:7px;background:#fff;border:1px solid #8ea3c4;border-radius:1px}
#vscroll .thumb{position:absolute;left:1px;top:26px;width:14px;height:701px;border:1px solid #6f83aa;border-radius:2px;background:linear-gradient(90deg,#eceef2 0,#dfe2e8 40%,#cdd2dc 60%,#c3c9d6 100%)}
#tabsbar{background:linear-gradient(#84a3d4 0,#94b1de 40%,#a3bde5 100%);border-top:1px solid #6483b8}
#tabsbar .nav{position:absolute;left:0;top:0;width:62px;height:15px;background:linear-gradient(#dfe9f7,#c5d6ee)}
.stab{position:absolute;top:0;height:15px;font-size:12px;line-height:15px;color:#20428a;white-space:nowrap;letter-spacing:0}
#hscroll{position:absolute;left:757px;top:0;width:503px;height:15px;background:linear-gradient(#86a4d5,#9ab5e0)}
#hscroll .thumb{position:absolute;left:24px;top:0px;width:400px;height:14px;border:1px solid #7f93b8;border-radius:2px;background:linear-gradient(#f1f4f9 0,#dde3ee 40%,#c6cfe0 60%,#b9c4d8 100%)}
#status{background:linear-gradient(#dfeafa 0,#d4e2f6 32%,#bed2ee 45%,#c4d6f1 62%,#d6e4f8 100%);border-top:1px solid #98b0d6}
#status .t{position:absolute;top:4px;font-size:11.5px;line-height:13px;color:#15326b;white-space:nowrap}
</style>
<div id="rframe"></div>
<div id="vscroll">
 <div class="split"><div class="abs" style="left:3px;top:2px;width:7px;height:1px;background:#6d84a8"></div></div>
 <svg class="abs" style="left:2px;top:13px" width="11" height="8" viewBox="0 0 11 8"><path d="M5.500 1L10 6.500H1z" fill="#3d5a94"/></svg>
 <div class="thumb"><div class="abs" style="left:3px;top:345px;width:6px;height:9px;background:repeating-linear-gradient(#7f95bb 0,#7f95bb 1px,transparent 1px,transparent 2px)"></div></div>
 <svg class="abs" style="left:2px;top:766px" width="11" height="8" viewBox="0 0 11 8"><path d="M5.500 7L10 1.500H1z" fill="#3d5a94"/></svg>
</div>
<div id="tabsbar">
 <div class="nav"></div>
 <svg class="abs" style="left:0;top:0" width="62" height="15" viewBox="0 0 62 15">
  <g fill="#274c94"><rect x="6" y="4" width="1.500" height="7"/><path d="M12 4v7l-4-3.500z"/><path d="M27 4v7l-4-3.500z"/><path d="M37 4v7l4-3.500z"/><path d="M50 4v7l4-3.500z"/><rect x="54.500" y="4" width="1.500" height="7"/></g>
 </svg>
 <svg class="abs" style="left:60px;top:0" width="210" height="15" viewBox="0 0 210 15">
  <path d="M2.500 0H64L53 14.500H2.500Z" fill="#fff" stroke="#5f7fb5" stroke-width=".9"/>
  <path d="M64 .500H117L106 14.500H53Z" fill="#c3d6f0" stroke="#6f8cc0" stroke-width=".9"/>
  <path d="M117 .500H170L159 14.500H106Z" fill="#c3d6f0" stroke="#6f8cc0" stroke-width=".9"/>
  <path d="M170 .500H204L193 14.500H159Z" fill="#cddcf3" stroke="#6f8cc0" stroke-width=".9"/>
  <rect x="177.500" y="5.500" width="10" height="7" rx="1" fill="#fff" stroke="#7a8db0"/><path d="M176 1.500l1.200 2.300l2.300 .3l-1.800 1.600l.5 2.400l-2.200-1.300l-2.200 1.300l.5-2.400l-1.800-1.600l2.300-.3z" fill="#f2c230" stroke="#c79a14" stroke-width=".4"/>
 </svg>
 <div class="stab" style="left:72px;font-weight:bold;color:#1b2f66;letter-spacing:-.1px">Лист1</div>
 <div class="stab" style="left:126px">Лист2</div>
 <div class="stab" style="left:179px">Лист3</div>
 <div id="hscroll">
  <div class="abs" style="left:0;top:1px;width:6px;height:13px;background:#fff;border:1px solid #8ea3c4"><div class="abs" style="left:1px;top:3px;width:1px;height:5px;background:#6d84a8"></div></div>
  <svg class="abs" style="left:9px;top:3px" width="8" height="10" viewBox="0 0 8 10"><path d="M1 5L6.500 .500V9.500z" fill="#3d5a94"/></svg>
  <div class="thumb"><div class="abs" style="left:192px;top:3px;width:9px;height:5px;background:repeating-linear-gradient(90deg,#7f95bb 0,#7f95bb 1px,transparent 1px,transparent 2px)"></div></div>
  <svg class="abs" style="left:483px;top:3px" width="8" height="10" viewBox="0 0 8 10"><path d="M7 5L1.500 .500V9.500z" fill="#4d6797"/></svg>
  <div class="abs" style="left:496px;top:1px;width:6px;height:13px;background:#fff;border:1px solid #8ea3c4"><div class="abs" style="left:1px;top:3px;width:1px;height:5px;background:#6d84a8"></div></div>
 </div>
</div>
<div id="status">
 <div class="t" style="left:7px">Готово</div>
 <div class="abs" style="left:60px;top:1px;width:1px;height:19px;background:#a9bfdf;box-shadow:1px 0 0 #e8f0fa"></div>
 <div class="abs" style="left:1034px;top:0;width:246px;height:20px;background:linear-gradient(#c3d6f0 0,#b3c9e8 45%,#9fb9df 50%,#b0c7e8 100%);border-left:1px solid #9db3d6"></div>
 <div class="abs" style="left:1040px;top:2px;width:57px;height:18px;border:1px solid #c3d3ea;border-radius:3px;background:linear-gradient(#d7e3f4,#bdd0ea)"></div>
 <div class="abs" style="left:1041px;top:3px;width:19px;height:16px;border-radius:2px;background:linear-gradient(#fdeac4,#f8c970 55%,#fbdc9c)"></div>
 <svg class="abs" style="left:1040px;top:2px" width="58" height="18" viewBox="0 0 58 18">
  <path d="M4.500 3.500h12v10h-12zM4.500 7h12M4.500 10.500h12M8.500 3.500v10M12.500 3.500v10" fill="#fff" stroke="#5a5140" stroke-width="1"/>
  <rect x="22.500" y="3.500" width="12" height="11" fill="#c9ced8" stroke="#6d7588"/><rect x="25.500" y="5.500" width="6" height="7" fill="#fff" stroke="#8a93a6" stroke-width=".8"/>
  <rect x="41.500" y="3.500" width="12" height="11" fill="#c9ced8" stroke="#6d7588"/><rect x="43" y="5" width="4" height="6" fill="#fff"/><rect x="48" y="5" width="4" height="6" fill="#fff"/>
 </svg>
 <div class="t" style="left:1105px;top:5px;font-size:11.5px;letter-spacing:-.3px">100%</div>
 <svg class="abs" style="left:1138px;top:1px" width="142" height="19" viewBox="0 0 142 19">
  <defs><radialGradient id="zg" cx=".5" cy=".3" r=".7"><stop offset="0" stop-color="#fff"/><stop offset="1" stop-color="#c5d2e6"/></radialGradient></defs>
  <path d="M20 9.500h100" stroke="#6f87b2"/><path d="M20 10.500h100" stroke="#e9f0fa"/>
  <circle cx="11" cy="9.500" r="7.500" fill="url(#zg)" stroke="#6d82a8"/><rect x="7" y="8.500" width="8" height="2.200" fill="#3c4c6e"/>
  <circle cx="129" cy="9.500" r="7.500" fill="url(#zg)" stroke="#6d82a8"/><rect x="125" y="8.500" width="8" height="2.200" fill="#3c4c6e"/><rect x="127.900" y="5.500" width="2.200" height="8" fill="#3c4c6e"/>
  <path d="M65.500 3.500h7v7l-3.500 4l-3.500-4z" fill="#e9eef6" stroke="#5c7098"/><path d="M69 6v4" stroke="#8a9cc0"/>
 </svg>
</div>
<style>
#taskbar{background:linear-gradient(#3b3f45 0,#23262b 2px,#15171a 12px,#0e0f11 100%);border-top:1px solid #4f535a;overflow:hidden}
.tbtn{position:absolute;top:1px;height:37px;border:1px solid #85888c;border-radius:3px;background:linear-gradient(#6b6e72 0,#4b4d50 45%,#2a2b2d 52%,#323335 100%);box-shadow:inset 0 0 0 1px rgba(255,255,255,.12)}
.tbtn.act{border-color:#d2d4d6;background:linear-gradient(#d9dadb 0,#b9babb 45%,#8f9091 52%,#a7a8a9 100%)}
.stk{position:absolute;top:1px;height:37px;width:4px;border:1px solid #85888c;border-left:none;border-radius:0 3px 3px 0;background:linear-gradient(#5b5e62,#2a2b2d)}
#taskbar svg{position:absolute}
#taskbar .w{position:absolute;color:#fff;white-space:nowrap;font-size:12px;line-height:14px}
</style>
<div id="taskbar">
 <div class="abs" style="left:422px;top:-8px;width:76px;height:30px;border-radius:50%;background:radial-gradient(ellipse at center,rgba(250,236,236,.85) 0,rgba(242,224,224,.4) 45%,rgba(255,255,255,0) 70%)"></div>
 <!-- start orb -->
 <svg style="left:7px;top:0px" width="40" height="40" viewBox="0 0 40 40">
  <defs>
   <radialGradient id="so" cx=".5" cy=".75" r=".8"><stop offset="0" stop-color="#5ec8f2"/><stop offset=".45" stop-color="#1f78c4"/><stop offset="1" stop-color="#0b2c5e"/></radialGradient>
   <linearGradient id="sh" x1="0" y1="0" x2="0" y2="1"><stop offset="0" stop-color="#fff" stop-opacity=".75"/><stop offset="1" stop-color="#fff" stop-opacity=".05"/></linearGradient>
  </defs>
  <circle cx="20" cy="20" r="18.500" fill="url(#so)" stroke="#9fc3e6" stroke-width="1.200"/>
  <g transform="translate(20 21) scale(1.25) translate(-19 -21)">
  <path d="M11 14c3-1.500 5.500-1.500 8 0l-1.500 6c-2.500-1.500-5-1.500-8 0z" fill="#f0643c"/>
  <path d="M20.500 14.500c3 1.500 5.500 1.500 8.500 0l-1.500 6c-3 1.500-5.500 1.500-8.500 0z" fill="#8fd044"/>
  <path d="M9 21.500c3-1.500 5.500-1.500 8 0l-1.500 6c-2.500-1.500-5-1.500-8 0z" fill="#4aa6ea"/>
  <path d="M18.500 22c3 1.500 5.500 1.500 8.500 0l-1.500 6c-3 1.500-5.500 1.500-8.500 0z" fill="#fbd033"/>
  </g>
  <path d="M3.500 17a16.500 16.500 0 0 1 33 0c-9 5-24 5-33 0z" fill="url(#sh)"/>
 </svg>
 <!-- explorer -->
 <div class="tbtn" style="left:60px;width:53px"></div><div class="stk" style="left:113px"></div>
 <svg style="left:68px;top:4px" width="38" height="34" viewBox="0 0 38 34">
  <path d="M3 6h11l2 3h18v20H3z" fill="#e8c765" stroke="#b9953a"/>
  <path d="M5 11h28v18H5z" fill="#f7e4a0"/><path d="M3 14h32v16H3z" fill="#f2d57c" stroke="#c7a548"/>
  <rect x="5" y="5" width="5" height="2" fill="#3fae49"/><rect x="11" y="5" width="5" height="2" fill="#d84a3a"/>
  <path d="M8 20h22v11h-5v-5H13v5H8z" fill="#7fc4ec" stroke="#3f8fc4"/>
 </svg>
 <!-- wmp -->
 <svg style="left:135px;top:7px" width="30" height="28" viewBox="0 0 30 28">
  <path d="M6 1h22v24H6z" fill="#9ccaf0" opacity=".8"/><path d="M2 3h22v24H2z" fill="#5ea3dd" stroke="#8ec3ee"/>
  <circle cx="13" cy="15" r="8" fill="#f58220" stroke="#fbd3a8"/><path d="M10.500 10.500v9l7.500-4.500z" fill="#fff"/>
 </svg>
 <!-- IE -->
 <div class="tbtn" style="left:184px;width:58px"></div>
 <svg style="left:196px;top:2px" width="40" height="36" viewBox="0 0 40 36">
  <defs><linearGradient id="ieg" x1="0" y1="0" x2="0" y2="1"><stop offset="0" stop-color="#5cc0fa"/><stop offset="1" stop-color="#1463c4"/></linearGradient></defs>
  <text x="19" y="32" font-family="Liberation Sans,sans-serif" font-size="42" font-weight="bold" fill="url(#ieg)" text-anchor="middle">e</text>
  <path d="M4 30C-2 22 14 6 30 4c4 0 6 1 5 4" fill="none" stroke="#f2c230" stroke-width="2.600"/>
  <path d="M5 31c4 4 14-1 20-7" fill="none" stroke="#e0a820" stroke-width="2"/>
 </svg>
 <!-- firefox -->
 <div class="tbtn" style="left:246px;width:53px"></div><div class="stk" style="left:299px"></div>
 <svg style="left:254px;top:3px" width="38" height="36" viewBox="0 0 38 36">
  <defs><radialGradient id="ff" cx=".5" cy=".3" r=".75"><stop offset="0" stop-color="#9fdcf7"/><stop offset=".5" stop-color="#3d8fd8"/><stop offset="1" stop-color="#1b3f9c"/></radialGradient>
  <linearGradient id="fx" x1="0" y1="0" x2="1" y2="1"><stop offset="0" stop-color="#f0591c"/><stop offset=".6" stop-color="#ee6f1e"/><stop offset="1" stop-color="#f9b433"/></linearGradient></defs>
  <circle cx="19" cy="16" r="12" fill="url(#ff)"/>
  <path d="M4 6c1 2 1 3 3 4c2-3 5-4 7-4c-1 2-1 3 0 5c3 0 5 1 5 3c-3 0-5 1-6 3c-1 3 2 7 7 7c5 0 9-3 11-8c0-4 0-6 2-9c2 6 2 13-1 19c-3 5-8 8-14 8c-8 0-15-6-16-15c0-5 1-9 2-13z" fill="url(#fx)"/>
  <path d="M31 16c1-3 1-6 2-9c2 5 2 11 0 16c-1 2-2 4-4 5c2-4 3-8 2-12z" fill="#fbc640"/>
  <path d="M2 19c1 7 6 12 13 14c-4 0-8-1-11-5c-2-3-2-6-2-9z" fill="#d8451a"/>
 </svg>
 <!-- green globe -->
 <svg style="left:320px;top:4px" width="34" height="34" viewBox="0 0 34 34">
  <defs><radialGradient id="gg" cx=".5" cy=".3" r=".8"><stop offset="0" stop-color="#c9f07a"/><stop offset=".5" stop-color="#5dbb2a"/><stop offset="1" stop-color="#1f7a12"/></radialGradient></defs>
  <circle cx="17" cy="17" r="15.500" fill="url(#gg)" stroke="#9fe060" stroke-width="1.500"/>
  <circle cx="17" cy="17" r="10" fill="none" stroke="#e9f7c9" stroke-width="1.500"/><path d="M7 17h20M17 7v20" stroke="#e9f7c9" stroke-width="1.200"/>
  <path d="M17 9l3 9l-3 7l-3-7z" fill="#e3442b" stroke="#fff" stroke-width=".6"/>
 </svg>
 <!-- sims -->
 <svg style="left:384px;top:5px" width="30" height="30" viewBox="0 0 30 30">
  <defs><linearGradient id="sm" x1="0" y1="0" x2="1" y2="1"><stop offset="0" stop-color="#6fb3dd"/><stop offset="1" stop-color="#2d73a8"/></linearGradient></defs>
  <rect width="29" height="29" fill="url(#sm)"/><path d="M14.500 3l6 11.500l-6 11.500l-6-11.500z" fill="#5fcf4a"/><path d="M14.500 3l6 11.500h-12z" fill="#a8ef7a"/>
 </svg>
 <!-- qip -->
 <svg style="left:448px;top:3px" width="26" height="34" viewBox="0 0 26 34">
  <g fill="#f1e233" stroke="#8a7d12" stroke-width="1"><rect x="12" y="1" width="2" height="5"/><rect x="5.500" y="6.500" width="15" height="12"/><rect x="1.500" y="18.500" width="10" height="10"/><rect x="14.500" y="18.500" width="10" height="10"/><rect x="3.500" y="28.500" width="5" height="4"/><rect x="17.500" y="28.500" width="5" height="4"/></g>
  <circle cx="13" cy="12" r="3" fill="#5fae3a" stroke="#3c6f20"/><rect x="5" y="21" width="3" height="4" fill="#8a7d12"/><rect x="18" y="21" width="3" height="4" fill="#8a7d12"/>
 </svg>
 <!-- icq -->
 <svg style="left:506px;top:4px" width="32" height="32" viewBox="0 0 32 32">
  <g fill="#3fd027" stroke="#1f8a12" stroke-width=".8">
   <ellipse cx="16" cy="7" rx="4.500" ry="6"/><ellipse cx="16" cy="25" rx="4.500" ry="6"/>
   <ellipse cx="16" cy="7" rx="4.500" ry="6" transform="rotate(45 16 16)"/><ellipse cx="16" cy="7" rx="4.500" ry="6" transform="rotate(90 16 16)"/><ellipse cx="16" cy="7" rx="4.500" ry="6" transform="rotate(135 16 16)"/>
   <ellipse cx="16" cy="7" rx="4.500" ry="6" transform="rotate(-45 16 16)"/><ellipse cx="16" cy="7" rx="4.500" ry="6" transform="rotate(-90 16 16)"/>
  </g>
  <ellipse cx="16" cy="7" rx="4.500" ry="6" transform="rotate(-135 16 16)" fill="#e2352b" stroke="#8a1a12" stroke-width=".8"/>
  <circle cx="16" cy="16" r="4" fill="#f7e23a" stroke="#b59a12"/>
 </svg>
 <!-- bsplayer -->
 <svg style="left:569px;top:3px" width="32" height="32" viewBox="0 0 32 32">
  <circle cx="16" cy="16" r="14.500" fill="#2f8fd0" stroke="#a5d3f0" stroke-width="2.500"/>
  <path d="M6 11.500l5 4.500l-5 4.500z M9 11.500l5 4.500l-5 4.500z" fill="#fff"/>
  <text x="20.500" y="21" font-family="Liberation Sans,sans-serif" font-size="12" font-weight="bold" fill="#fff" text-anchor="middle" letter-spacing="-.5">BS</text>
 </svg>
 <!-- winamp -->
 <svg style="left:631px;top:4px" width="32" height="32" viewBox="0 0 32 32">
  <path d="M16 3l13 13l-13 13l-13-13z" fill="#f4f4f4" stroke="#2a2a2a"/><path d="M16 8l8 8l-8 8l-8-8z" fill="#2a2a2a"/>
  <path d="M25 5l-14 10h7l-11 12l17-11h-7z" fill="#f59a23" stroke="#fbd38a" stroke-width=".8"/>
 </svg>
 <!-- utorrent -->
 <div class="tbtn" style="left:680px;width:58px"></div>
 <svg style="left:693px;top:5px" width="32" height="31" viewBox="0 0 32 31">
  <rect x="1" y="1" width="30" height="29" fill="#1fa34a" stroke="#bff0cf" stroke-width="2"/>
  <text x="16" y="22" font-family="Liberation Sans,sans-serif" font-size="24" font-weight="bold" fill="#fff" text-anchor="middle">µ</text>
 </svg>
 <!-- word -->
 <div class="tbtn" style="left:742px;width:51px"></div><div class="stk" style="left:793px"></div><div class="stk" style="left:798px"></div>
 <svg style="left:750px;top:4px" width="36" height="34" viewBox="0 0 36 34">
  <path d="M4 8c6-6 14-7 22-5v24c-8-2-16-1-22 5z" fill="#2f5fb8" stroke="#b9cdf0"/>
  <path d="M10 9l20-3v24l-20-2z" fill="#f4f7fc" stroke="#9fb3d8"/>
  <text x="17" y="17" font-family="Liberation Serif,serif" font-size="11" font-weight="bold" fill="#2f5fb8" text-anchor="middle">W</text>
  <path d="M23 10h6M23 13h6M12 19h17M12 22h17M12 25h17" stroke="#2f5fb8" stroke-width="1.600"/>
 </svg>
 <!-- excel -->
 <div class="tbtn act" style="left:804px;width:58px"></div>
 <svg style="left:814px;top:4px" width="38" height="34" viewBox="0 0 38 34">
  <path d="M4 8c7-6 15-7 24-5v10" fill="none" stroke="#5f9f3a" stroke-width="1.500"/><path d="M5 9v20" stroke="#5f9f3a" stroke-width="1.500"/>
  <path d="M8 12l26-2v20l-26-1z" fill="#e9f3dc" stroke="#8fbf6a"/>
  <text x="17" y="21" font-family="Liberation Sans,sans-serif" font-size="13" font-weight="bold" fill="#2f7a1f" text-anchor="middle">X</text>
  <g fill="#6fae4a"><rect x="24" y="13" width="8" height="4"/><rect x="24" y="19" width="8" height="4"/><rect x="24" y="25" width="8" height="3"/><rect x="10" y="24" width="6" height="4"/><rect x="17" y="24" width="6" height="4"/></g>
 </svg>
 <!-- tray -->
 <div class="w" style="left:956px;top:11px;font-size:12px;letter-spacing:-.5px">RU</div>
 <svg style="left:977px;top:10px" width="18" height="18" viewBox="0 0 18 18"><circle cx="9" cy="9" r="7.500" fill="#2444c8" stroke="#cfd8f5" stroke-width="1.300"/><text x="9" y="13.500" font-family="Liberation Sans,sans-serif" font-size="12" font-weight="bold" fill="#fff" text-anchor="middle">?</text></svg>
 <svg style="left:1001px;top:7px" width="14" height="24" viewBox="0 0 14 24"><rect x="5.500" y="2.500" width="6" height="4" fill="none" stroke="#fff"/><rect x="2.500" y="5.500" width="6" height="4" fill="#15171a" stroke="#fff"/><path d="M4 16h6l-3 3.500z" fill="#fff"/></svg>
 <svg style="left:1021px;top:12px" width="20" height="18" viewBox="0 0 20 18"><path d="M10 1l8 8l-8 8l-8-8z" fill="#d8d8d8" stroke="#333"/><path d="M16 2l-10 6h5l-8 8l12-7h-5z" fill="#f59a23"/></svg>
 <svg style="left:1044px;top:10px" width="20" height="22" viewBox="0 0 20 22"><rect x="5" y="1" width="6" height="5" fill="#bfc3c8"/><rect x="3" y="6" width="10" height="11" rx="2" fill="#8a8f96"/><circle cx="13" cy="15" r="5" fill="#2fae3a" stroke="#0f6a1a"/><path d="M10.500 15l2 2l3-4" fill="none" stroke="#fff" stroke-width="1.500"/></svg>
 <svg style="left:1069px;top:13px" width="17" height="17" viewBox="0 0 17 17"><rect x=".8" y=".8" width="15.400" height="15.400" fill="#1fa34a" stroke="#d9f5e2" stroke-width="1.600"/><text x="8.500" y="12.500" font-family="Liberation Sans,sans-serif" font-size="13" font-weight="bold" fill="#fff" text-anchor="middle">µ</text></svg>
 <svg style="left:1092px;top:11px" width="20" height="20" viewBox="0 0 20 20"><path d="M2 2h13l-4 16H2z" fill="#b9bcc0"/><path d="M5 3v14M13 3l-7 8l6 6" fill="none" stroke="#3a3a3a" stroke-width="2"/><path d="M14 10l5 9h-10z" fill="#f7d52a" stroke="#8a7412"/><rect x="13.500" y="13" width="1" height="3" fill="#000"/></svg>
 <svg style="left:1118px;top:11px" width="20" height="20" viewBox="0 0 20 20"><path d="M3 2v17" stroke="#fff" stroke-width="1.500"/><path d="M4 3c3-1 5 1 8 0v7c-3 1-5-1-8 0z" fill="#f1f1f1"/><circle cx="13" cy="14" r="4.500" fill="#d7332b" stroke="#f5b5b0"/><path d="M11 12l4 4M15 12l-4 4" stroke="#fff" stroke-width="1.400"/></svg>
 <svg style="left:1140px;top:11px" width="22" height="20" viewBox="0 0 22 20"><rect x="6.500" y="5.500" width="12" height="9" fill="#15171a" stroke="#fff" stroke-width="1.300"/><path d="M9 18h8M13 15v3" stroke="#fff" stroke-width="1.300"/><rect x="1.500" y="3.500" width="5" height="7" fill="#15171a" stroke="#fff"/><path d="M3 1v3M5 1v3" stroke="#fff"/></svg>
 <svg style="left:1163px;top:11px" width="20" height="20" viewBox="0 0 20 20"><path d="M2 7h4l5-5v16l-5-5H2z" fill="#fff"/><path d="M13 6c2 2 2 6 0 8M15.500 4c3 3 3 9 0 12" fill="none" stroke="#d9d9d9" stroke-width="1.200"/></svg>
 <div class="w" style="left:1197px;top:6px;width:60px;text-align:center;font-size:11.5px;letter-spacing:-.3px">0:30</div>
 <div class="w" style="left:1190px;top:23px;width:74px;text-align:center;font-size:11.5px;letter-spacing:-.45px">26.09.2010</div>
 <div class="abs" style="left:1266px;top:1px;width:13px;height:40px;border:1px solid #6b6e72;border-radius:2px;background:linear-gradient(#5d6064,#3a3b3e 45%,#232426 55%,#2a2b2d)"></div>
</div>
</body>
</html>
